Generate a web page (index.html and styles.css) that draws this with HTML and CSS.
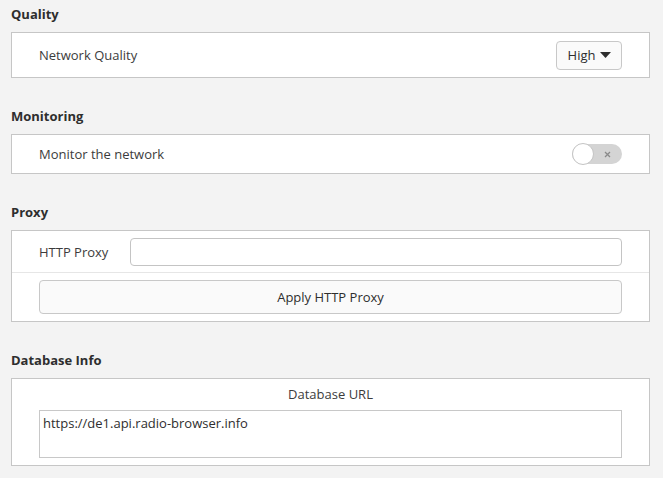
FILE: index.html
```html
<!DOCTYPE html>
<html lang="en">
<head>
<meta charset="utf-8">
<title>Network Settings</title>
<link rel="stylesheet" href="styles.css">
</head>
<body>
<main class="page">
  <section class="group">
    <h2 class="group-title">Quality</h2>
    <div class="card">
      <div class="row row-quality">
        <span class="label">Network Quality</span>
        <button class="dropdown" type="button">
          <span>High</span>
          <svg class="caret" width="11" height="6" viewBox="0 0 11 6"><path d="M0 0H11L5.5 6Z" fill="#2e2e2e"/></svg>
        </button>
      </div>
    </div>
  </section>

  <section class="group">
    <h2 class="group-title">Monitoring</h2>
    <div class="card">
      <div class="row row-monitor">
        <span class="label">Monitor the network</span>
        <span class="switch" role="switch" aria-checked="false">
          <span class="knob"></span>
          <svg class="switch-x" width="7" height="7" viewBox="0 0 7 7"><path d="M1 1L6 6M6 1L1 6" stroke="#8a8a8a" stroke-width="1.3" fill="none"/></svg>
        </span>
      </div>
    </div>
  </section>

  <section class="group">
    <h2 class="group-title">Proxy</h2>
    <div class="card">
      <div class="row row-proxy">
        <span class="label proxy-label">HTTP Proxy</span>
        <input class="text-input" type="text" value="">
      </div>
      <div class="row row-apply">
        <button class="wide-button" type="button">Apply HTTP Proxy</button>
      </div>
    </div>
  </section>

  <section class="group">
    <h2 class="group-title">Database Info</h2>
    <div class="card card-db">
      <div class="db-title">Database URL</div>
      <div class="text-area">https://de1.api.radio-browser.info</div>
    </div>
  </section>
</main>
</body>
</html>
```

FILE: styles.css
```css
* {
  box-sizing: border-box;
}

html, body {
  margin: 0;
  padding: 0;
  background: #f3f3f3;
}

body {
  font-family: "Open Sans", "DejaVu Sans", sans-serif;
  font-size: 13px;
  color: #3c3c3c;
  width: 663px;
  height: 478px;
  overflow: hidden;
}

.page {
  padding: 5px 13px 0 11px;
  display: flex;
  flex-direction: column;
  gap: 29px;
}

.group {
  display: flex;
  flex-direction: column;
  gap: 9px;
}

.group-title {
  margin: 0;
  font-size: 13px;
  line-height: 18px;
  font-weight: 700;
  color: #2e2e2e;
}

.card {
  background: #ffffff;
  border: 1px solid #c6c6c6;
}

.row {
  display: flex;
  align-items: center;
  justify-content: space-between;
  padding: 0 27px;
}

.row-quality {
  height: 44px;
}

.row-monitor {
  height: 38px;
}

.label {
  line-height: 18px;
}

.dropdown {
  font: inherit;
  color: #2e2e2e;
  height: 29px;
  width: 66px;
  display: flex;
  align-items: center;
  justify-content: center;
  gap: 5px;
  padding: 0 0 0 1px;
  background: #fafafa;
  border: 1px solid #c8c8c8;
  border-radius: 4px;
}

.caret {
  display: block;
}

.switch {
  position: relative;
  width: 50px;
  height: 20px;
  border-radius: 10px;
  background: #d4d4d4;
  display: block;
}

.knob {
  position: absolute;
  left: 0;
  top: -1px;
  width: 22px;
  height: 22px;
  border-radius: 50%;
  background: #ffffff;
  border: 1px solid #c4c4c4;
}

.switch-x {
  position: absolute;
  right: 11px;
  top: 7px;
}

.row-proxy {
  height: 42px;
  padding-top: 1px;
  justify-content: flex-start;
  gap: 0;
  border-bottom: 1px solid #e6e6e6;
}

.proxy-label {
  width: 91px;
  flex: none;
}

.text-input {
  flex: 1;
  height: 28px;
  font: inherit;
  color: #3c3c3c;
  background: #ffffff;
  border: 1px solid #c4c4c4;
  border-radius: 4px;
  padding: 0 6px;
  margin: 0;
}

.row-apply {
  padding: 7px 27px 7px;
}

.wide-button {
  width: 100%;
  height: 34px;
  font: inherit;
  color: #2e2e2e;
  background: #fafafa;
  border: 1px solid #c8c8c8;
  border-radius: 4px;
  margin: 0;
}

.card-db {
  padding: 0 27px 7px;
}

.db-title {
  height: 31px;
  line-height: 31px;
  text-align: center;
}

.text-area {
  height: 48px;
  border: 1px solid #c8c8c8;
  background: #ffffff;
  padding: 3px 3px;
  line-height: 18px;
  color: #2e2e2e;
}
```
